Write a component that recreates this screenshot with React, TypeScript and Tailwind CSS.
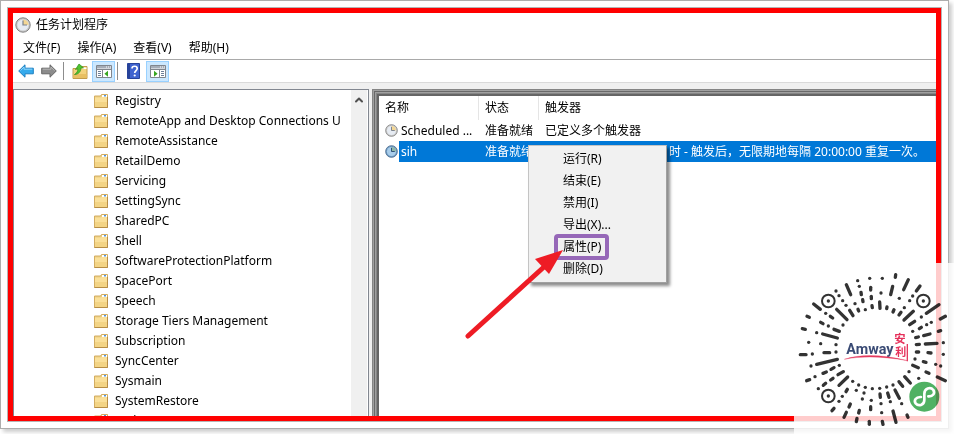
import clsx from "clsx";
import { ChevronUp } from "lucide-react";

const menus = ["文件(F)", "操作(A)", "查看(V)", "帮助(H)"];

const folders = [
  "Registry",
  "RemoteApp and Desktop Connections U",
  "RemoteAssistance",
  "RetailDemo",
  "Servicing",
  "SettingSync",
  "SharedPC",
  "Shell",
  "SoftwareProtectionPlatform",
  "SpacePort",
  "Speech",
  "Storage Tiers Management",
  "Subscription",
  "SyncCenter",
  "Sysmain",
  "SystemRestore",
  "Task Manager",
];

const actions = ["运行(R)", "结束(E)", "禁用(I)", "导出(X)...", "属性(P)", "删除(D)"];

// x1, y1, x2, y2 of every stroke in the round code
const strokes = [
  [184, 104, 197, 134], [228, 127, 229, 134], [233, 149, 234, 155], [257, 112, 257, 120],
  [259, 139, 259, 146], [261, 167, 262, 173], [219, 178, 221, 183], [194, 181, 204, 197],
  [155, 178, 186, 209], [86, 162, 106, 178], [136, 199, 143, 204], [66, 199, 73, 202],
  [107, 217, 114, 221], [147, 238, 163, 244], [52, 236, 61, 238], [113, 252, 157, 264],
  [46, 314, 63, 314], [117, 308, 134, 308], [95, 343, 157, 328], [65, 392, 74, 389],
  [114, 370, 124, 366], [138, 358, 147, 353], [115, 406, 122, 400], [137, 390, 144, 385],
  [159, 374, 175, 365], [162, 406, 188, 381], [223, 481, 221, 489], [216, 505, 214, 515],
  [187, 418, 183, 425], [147, 475, 141, 482], [196, 462, 192, 471], [184, 487, 177, 502],
  [257, 470, 257, 479], [253, 514, 253, 523], [332, 74, 331, 82], [370, 89, 356, 119],
  [405, 108, 394, 123], [323, 109, 317, 134], [284, 156, 285, 175], [306, 171, 305, 176],
  [327, 179, 324, 186], [348, 187, 342, 195], [385, 184, 357, 210], [462, 164, 424, 190],
  [389, 214, 374, 224], [481, 199, 466, 207], [409, 232, 403, 236], [467, 242, 460, 244],
  [435, 252, 416, 257], [400, 261, 392, 263], [456, 280, 421, 282], [403, 283, 394, 284],
  [438, 309, 429, 308], [401, 306, 394, 306], [423, 337, 415, 335], [400, 353, 383, 346],
  [481, 392, 457, 381], [432, 370, 423, 366], [376, 399, 359, 380], [353, 409, 342, 395],
  [285, 432, 286, 442], [308, 429, 312, 442], [330, 420, 343, 445], [292, 514, 294, 523],
  [324, 483, 333, 517], [366, 495, 369, 502],
];

const dots = [
  [218, 92], [254, 85], [153, 123], [162, 137], [173, 152], [183, 166], [223, 109], [241, 179],
  [210, 161], [122, 190], [174, 225], [130, 228], [95, 248], [71, 277], [107, 281], [153, 284],
  [82, 312], [153, 306], [78, 348], [90, 380], [163, 346], [100, 416], [203, 394], [221, 405],
  [241, 412], [262, 416], [214, 421], [237, 429], [232, 447], [172, 439], [162, 454], [259, 451],
  [292, 85], [288, 129], [343, 145], [383, 138], [374, 152], [358, 173], [409, 201], [439, 217],
  [425, 224], [383, 244], [475, 278], [475, 313], [390, 327], [467, 348], [452, 343], [401, 385],
  [372, 365], [324, 405], [305, 411], [284, 415], [288, 461], [316, 455], [350, 461], [290, 488],
];

const finders = [[130, 153], [415, 153], [130, 438]];

function ClockIcon({ className, selected }: { className: string; selected?: boolean }) {
  return (
    <svg viewBox="0 0 16 16" className={className} aria-hidden="true">
      <circle cx="8" cy="8" r="7.2" fill={selected ? "#6f9cc4" : "#c9c9c9"} stroke={selected ? "#47688a" : "#808080"} />
      <circle cx="8" cy="8" r="5.6" fill={selected ? "#a9cdea" : "#e6ebf2"} />
      <path d="M8 8V2.4A5.6 5.6 0 0 1 13.6 8Z" fill={selected ? "#8fb8a8" : "#f3d694"} />
      <path d="M8 3.5V8h4" fill="none" stroke={selected ? "#2d4f78" : "#7a828e"} strokeWidth="1.2" />
    </svg>
  );
}

function FolderIcon() {
  return (
    <svg viewBox="0 0 14 14" className="size-3.5 shrink-0" aria-hidden="true">
      <path d="M.5 2h6l1-1.500h6v13H.5Z" fill="#ecce82" stroke="#d3ad62" />
      <path d="M8 1h5v2H8Z" fill="#fff" />
      <path d="M10 1h2v1.500h-2Z" fill="#4f93dd" />
      <path d="M1 3.500h6l1-.5h5v10H1Z" fill="#fae09a" />
      <path d="M1 8h12v5H1Z" fill="#f3d485" />
      <path d="M.5 13.500h13V3" fill="none" stroke="#b78d45" />
    </svg>
  );
}

function ArrowIcon({ forward }: { forward?: boolean }) {
  return (
    <svg viewBox="0 0 16 14" className={clsx("h-3.5 w-4", forward && "-scale-x-100")} aria-hidden="true">
      <path
        d="M.7 7 7 .8v3.400h8.300v5.600H7v3.400Z"
        fill={forward ? "#8c8c8c" : "#35aaec"}
        stroke={forward ? "#666" : "#1d7fc0"}
      />
      <path d="M2.500 6.600 6 3v2.200h8.300" fill="none" stroke={forward ? "#b5b5b5" : "#8fd6fb"} />
    </svg>
  );
}

function UpFolderIcon() {
  return (
    <svg viewBox="0 0 15 16" className="h-4 w-4" aria-hidden="true">
      <path d="M.5 5.500h7l1.500-2h5.500v12H.5Z" fill="#f3d27d" stroke="#c39b4b" />
      <path d="M10 4.500h4v1.500h-4Z" fill="#fff" />
      <path d="M1 11h13v4H1Z" fill="#e8bf62" />
      <path d="M2 11.500C4.500 10 5.500 8 5.200 5.800L3 6.500 6.500 1l4.500 3.800-2.600.2C8.500 8.500 6 11.500 2 11.500Z" fill="#4fc32f" stroke="#2d8f1b" strokeWidth=".7" />
    </svg>
  );
}

function PaneIcon({ right }: { right?: boolean }) {
  return (
    <svg viewBox="0 0 16 13" className="h-[13px] w-4" aria-hidden="true">
      <path d="M.5.5h15v12H.5Z" fill="#fff" stroke="#80868e" />
      <path d="M1 1h14v2.500H1Z" fill="#a5adb8" />
      <path d="M10 1.500h1v1h-1ZM12 1.500h1v1h-1ZM14 1.500h1v1h-1Z" fill="#fff" />
      <path d="M1 4.500h14" stroke="#80868e" />
      {right ? (
        <>
          <path d="M9.500 4v9" stroke="#80868e" />
          <path d="M11 6.500h3M11 8.500h3M11 10.500h3" stroke="#6d7f99" />
          <path d="m4 5.800 3.600 3L4 11.800Z" fill="#37a51f" />
        </>
      ) : (
        <>
          <path d="M6.500 4v9" stroke="#80868e" />
          <path d="M2 6.500h3M2 8.500h3M2 10.500h3" stroke="#6d7f99" />
          <path d="m12 5.800-3.600 3 3.600 3Z" fill="#37a51f" />
        </>
      )}
    </svg>
  );
}

function HelpIcon() {
  return (
    <svg viewBox="0 0 13 16" className="h-4 w-[13px]" aria-hidden="true">
      <path d="M.5.5h12v15H.5Z" fill="#3f63cf" stroke="#27439b" />
      <path d="M1 1h2v14H1Z" fill="#27439b" />
      <path d="M5 5.500C5 2.500 10.200 2.500 10.200 5.500 10.200 7.500 7.700 7.600 7.700 10" fill="none" stroke="#fff" strokeWidth="1.700" />
      <circle cx="7.700" cy="12.500" r="1.100" fill="#fff" />
    </svg>
  );
}

function Toolbar() {
  return (
    <div className="flex h-[23px] items-center border-b border-[#dadada] pl-[5px]">
      <button aria-label="后退"><ArrowIcon /></button>
      <button aria-label="前进" className="ml-[7px]"><ArrowIcon forward /></button>
      <span className="ml-1.5 h-[18px] w-px bg-[#8d8d8d]" />
      <button aria-label="向上" className="ml-2"><UpFolderIcon /></button>
      <button aria-label="控制台树" className="ml-1 flex h-[21px] w-[23px] items-center justify-center border border-[#99d1ff] bg-[#cce8ff]">
        <PaneIcon />
      </button>
      <span className="ml-0.5 h-[18px] w-px bg-[#8d8d8d]" />
      <button aria-label="帮助" className="ml-[9px]"><HelpIcon /></button>
      <button aria-label="操作窗格" className="ml-1.5 flex h-[21px] w-[23px] items-center justify-center border border-[#99d1ff] bg-[#cce8ff]">
        <PaneIcon right />
      </button>
    </div>
  );
}

function FolderTree() {
  return (
    <div className="flex w-[356px] shrink-0 overflow-hidden border border-b-0 border-[#828790] bg-white">
      <ul className="min-w-0 flex-1 overflow-hidden pt-px">
        {folders.map((name) => (
          <li key={name} className="flex h-5 items-center gap-[7px] pl-20 whitespace-nowrap">
            <FolderIcon />
            {name}
          </li>
        ))}
      </ul>
      <div className="mr-px w-4 bg-[#f0f0f0] pt-1">
        <ChevronUp className="mx-auto size-3 text-[#505050]" strokeWidth={4} />
      </div>
    </div>
  );
}

function ContextMenu() {
  return (
    <div className="absolute top-[49px] left-[149px] w-[139px] border border-[#c4c4c4] border-r-[#a0a0a0] border-b-[#a0a0a0] bg-[#f1f1f1] py-0.5 shadow-[3px_3px_3px_rgba(0,0,0,0.45)]">
      {actions.map((action) => (
        <button key={action} className="relative block h-[22px] w-full pl-[34px] text-left">
          {action}
          {action === "属性(P)" && (
            <span className="absolute -top-0.5 left-[25px] h-[26px] w-[55px] rounded-sm border-4 border-[#9668b8]" />
          )}
        </button>
      ))}
      <svg viewBox="0 0 110 100" className="absolute top-[99px] -left-[69px] h-[100px] w-[110px]" aria-hidden="true">
        <path d="M8 91 85 21" stroke="#ee1c25" strokeWidth="5" strokeLinecap="round" />
        <path d="M103 5 75 14 89 29Z" fill="#ee1c25" />
      </svg>
    </div>
  );
}

function TaskList() {
  return (
    <div className="min-w-0 flex-1 bg-white pt-[7px] pl-[7px] shadow-[inset_1px_1px_#858585,inset_2px_2px_#a0a0a0,inset_3px_3px_#696969,inset_4px_4px_#a0a0a0,inset_5px_5px_#858585,inset_7px_7px_#656565]">
      <div className="relative">
        <table className="w-full table-fixed border-separate border-spacing-0 text-left whitespace-nowrap">
          <thead>
            <tr className="h-6">
              <th className="w-[100px] border-r border-[#e5e5e5] pl-1.5 font-normal">名称</th>
              <th className="w-[60px] border-r border-[#e5e5e5] pl-1.5 font-normal">状态</th>
              <th className="border-r border-[#e5e5e5] pl-1.5 font-normal">触发器</th>
            </tr>
          </thead>
          <tbody>
            <tr className="h-[21px]">
              <td>
                <div className="flex items-center pl-1.5">
                  <ClockIcon className="mr-[3px] size-[13px] shrink-0" />
                  Scheduled ...
                </div>
              </td>
              <td className="pl-1.5">准备就绪</td>
              <td className="pl-1.5">已定义多个触发器</td>
            </tr>
            <tr className="h-[21px] text-white">
              <td>
                <div className="flex h-[21px] items-center pl-1.5">
                  <ClockIcon className="mr-px size-[13px] shrink-0" selected />
                  <span className="flex h-full flex-1 items-center bg-[#0078d7] pl-0.5">sih</span>
                </div>
              </td>
              <td className="bg-[#0078d7] pl-1.5">准备就绪</td>
              <td className="bg-[#0078d7] pl-[130px]">时 - 触发后，无限期地每隔 20:00:00 重复一次。</td>
            </tr>
          </tbody>
        </table>
        <ContextMenu />
      </div>
    </div>
  );
}

function RoundCode() {
  return (
    <div className="absolute right-0 bottom-0 h-[171px] w-40 bg-white/80">
      <svg viewBox="27 39 480 513" className="h-full w-full mix-blend-multiply">
        <g stroke="#333" strokeWidth="10" strokeLinecap="round">
          {strokes.map(([x1, y1, x2, y2]) => (
            <line key={`${x1}-${y1}`} x1={x1} y1={y1} x2={x2} y2={y2} />
          ))}
        </g>
        {dots.map(([x, y]) => (
          <circle key={`${x}-${y}`} cx={x} cy={y} r="5" fill="#333" />
        ))}
        {finders.map(([x, y]) => (
          <g key={`${x}-${y}`}>
            <circle cx={x} cy={y} r="19" fill="none" stroke="#333" strokeWidth="6" />
            <circle cx={x} cy={y} r="5" fill="#333" />
          </g>
        ))}
        <text x="184" y="313" fontSize="43" fontWeight="700" fill="#3a4b75" className="font-[Roboto,sans-serif]">
          Amway
        </text>
        <path d="M178 328C225 312 290 313 368 332 290 318 225 318 178 328Z" fill="#e5395f" stroke="#e5395f" />
        <path d="M367 282V334" stroke="#e5395f" strokeWidth="4" />
        <g fill="#e5305a" fontWeight="700" className="font-['Noto_Sans_CJK_SC',sans-serif]">
          <text x="328" y="278" fontSize="34">安</text>
          <text x="331" y="317" fontSize="33">利</text>
        </g>
        <circle cx="418" cy="440" r="45" fill="#50b163" />
        <path
          d="M408 441C392 440 386 452 392 460 400 470 418 466 418 450V431C418 415 436 409 445 420 451 430 444 440 430 439"
          fill="none"
          stroke="#fff"
          strokeWidth="8"
          strokeLinecap="round"
        />
      </svg>
    </div>
  );
}

export default function App() {
  return (
    <div className="relative h-screen overflow-hidden bg-white pr-[5px] pb-[5px] font-['Noto_Sans','Noto_Sans_CJK_SC',sans-serif] text-xs text-black">
      <div className="h-full border border-[#adadad] bg-white p-1.5 shadow-[3px_3px_4px_rgba(0,0,0,0.2)]">
        <div className="h-full border border-[#b5b5b5]">
          <main className="flex h-full flex-col overflow-hidden border-5 border-[#ff0000]">
            <header className="flex h-[23px] shrink-0 items-center gap-[5px] pl-0.5">
              <ClockIcon className="size-4" />
              <h1>任务计划程序</h1>
            </header>
            <nav className="flex h-6 shrink-0 items-center gap-[17px] border-b border-[#a9a9a9] pl-2.5">
              {menus.map((menu) => (
                <button key={menu}>{menu}</button>
              ))}
            </nav>
            <Toolbar />
            <div className="flex min-h-0 flex-1 gap-[3px] bg-[#f0f0f0] pt-1.5">
              <FolderTree />
              <TaskList />
            </div>
          </main>
        </div>
      </div>
      <RoundCode />
    </div>
  );
}
